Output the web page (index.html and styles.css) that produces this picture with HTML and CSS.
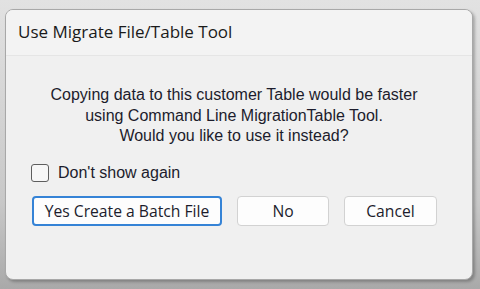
FILE: index.html
```html
<!DOCTYPE html>
<html lang="en">
<head>
  <meta charset="UTF-8">
  <title>Use Migrate File/Table Tool</title>
  <link rel="stylesheet" href="styles.css">
</head>
<body>
  <div class="dialog">
    <div class="titlebar">Use Migrate File/Table Tool</div>
    <div class="content">
      <p class="message">Copying data to this customer Table would be faster<br>using Command Line MigrationTable Tool.<br>Would you like to use it instead?</p>
      <label class="check"><span class="box"></span>Don't show again</label>
      <div class="buttons">
        <button class="btn primary">Yes Create a Batch File</button>
        <button class="btn no">No</button>
        <button class="btn cancel">Cancel</button>
      </div>
    </div>
  </div>
</body>
</html>
```

FILE: styles.css
```css
html, body {
  margin: 0;
  padding: 0;
  height: 100%;
}
body {
  background: linear-gradient(#e2e2e2, #c8c8c8 70%, #a9a9a9);
  padding: 9px 7px 9px 5px;
  box-sizing: border-box;
  font-family: "Liberation Sans", Arial, sans-serif;
}
.dialog {
  height: 271px;
  background: #f0f0f0;
  border: 1px solid #a8a8a8;
  border-radius: 8px;
  box-sizing: border-box;
  overflow: hidden;
  display: flex;
  flex-direction: column;
  box-shadow: 2px 2px 3px rgba(0, 0, 0, 0.25);
}
.titlebar {
  height: 45px;
  background: #f3f3f3;
  border-bottom: 1px solid #e5e5e5;
  font-family: "Open Sans", "Noto Sans", sans-serif;
  font-size: 17px;
  color: #1a1a1a;
  padding-left: 12px;
  line-height: 44px;
}
.content {
  padding: 29px 0 0 25px;
}
.message {
  margin: 0;
  width: 406px;
  text-align: center;
  font-size: 16px;
  line-height: 20.5px;
  color: #1c1c2c;
}
.check {
  display: flex;
  align-items: center;
  margin-top: 17px;
  font-size: 16px;
  color: #1c1c2c;
}
.box {
  width: 16px;
  height: 16px;
  border: 1px solid #5e5e5e;
  border-radius: 3px;
  background: #f7f7f7;
  margin-right: 9px;
}
.buttons {
  display: flex;
  gap: 15px;
  margin-top: 14px;
  margin-left: 1px;
}
.btn {
  height: 30px;
  background: #fdfdfd;
  border: 1px solid #d2d2d2;
  border-radius: 4px;
  font-family: "Open Sans", "Noto Sans", sans-serif;
  font-size: 15.7px;
  color: #1c1c2c;
  padding: 0;
}
.primary {
  width: 190px;
  border: 2px solid #3583d6;
}
.no {
  width: 92px;
}
.cancel {
  width: 93px;
}
```
